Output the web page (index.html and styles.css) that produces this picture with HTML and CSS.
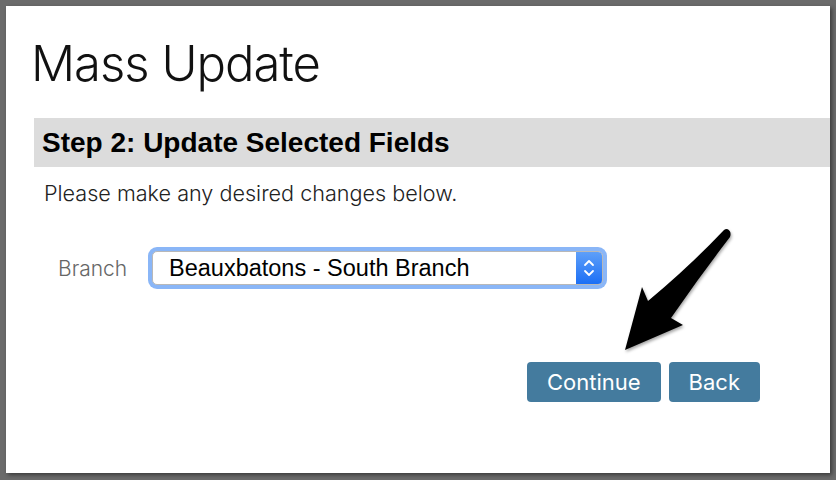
FILE: index.html
```html
<!DOCTYPE html>
<html lang="en">
<head>
    <meta charset="UTF-8">
    <meta name="viewport" content="width=device-width, initial-scale=1.0">
    <title>Mass Update</title>
    <link rel="stylesheet" href="styles.css">
</head>
<body>
    <div class="panel">
        <h1 class="page-title">Mass Update</h1>

        <div class="step">
            <h2 class="step-bar">Step 2: Update Selected Fields</h2>
            <p class="intro">Please make any desired changes below.</p>

            <div class="field-row">
                <label class="field-label">Branch</label>
                <div class="select">
                    <span class="select-value">Beauxbatons - South Branch</span>
                    <span class="stepper">
                        <svg width="12" height="20" viewBox="0 0 12 20">
                            <path d="M2 7 L6 3 L10 7 M2 13 L6 17 L10 13" fill="none" stroke="#fff" stroke-width="1.8" stroke-linecap="round" stroke-linejoin="round"/>
                        </svg>
                    </span>
                </div>
            </div>

            <div class="actions">
                <button class="btn">Continue</button>
                <button class="btn">Back</button>
            </div>
        </div>

        <!-- pointer arrow aimed at the Continue button -->
        <svg class="pointer" width="130" height="140" viewBox="610 222 130 140">
            <path d="M724 230 Q690 266 648 301 L642 287 L625 350 L683 325 L671 318 Q700 276 730 237 Q732 231 727 229 Q725 229 724 230 Z" fill="#000"/>
        </svg>
    </div>
</body>
</html>
```

FILE: styles.css
```css
body {
    margin: 0;
    padding: 6px 6px 7px 6px;
    background: #6b6b6b;
    font-family: 'Inter', 'Liberation Sans', sans-serif;
}
.panel {
    position: relative;
    height: 467px;
    background: #fff;
    box-shadow: 2px 2px 4px rgba(0, 0, 0, 0.45);
    padding-left: 28px;
    box-sizing: border-box;
}
.page-title {
    margin: 0 0 0 -3px;
    padding-top: 28px;
    height: 84px;
    font-size: 49px;
    font-weight: 300;
    color: #111;
    letter-spacing: -1px;
}
.step-bar {
    margin: 0;
    height: 49px;
    line-height: 49px;
    padding-left: 8px;
    background: #dcdcdc;
    font-family: 'Liberation Sans', Arial, sans-serif;
    font-size: 28px;
    font-weight: bold;
    color: #000;
}
.intro {
    margin: 13px 0 0 10px;
    font-size: 21.6px;
    font-weight: 300;
    color: #222;
}
.field-row {
    display: flex;
    align-items: center;
    margin-top: 45px;
    padding-left: 24px;
}
.field-label {
    width: 94px;
    font-size: 21px;
    font-weight: 300;
    color: #666;
}
.select {
    display: flex;
    align-items: stretch;
    width: 449px;
    height: 32px;
    border: 1px solid #b8b8b8;
    border-radius: 5px;
    box-shadow: 0 0 0 4px #8ab6f7;
    background: #fff;
    overflow: hidden;
}
.select-value {
    flex: 1;
    padding-left: 16px;
    line-height: 32px;
    font-family: 'Liberation Sans', Arial, sans-serif;
    font-size: 23.5px;
    color: #000;
}
.stepper {
    width: 26px;
    display: flex;
    align-items: center;
    justify-content: center;
    background: linear-gradient(#5e9ff9, #1c6ff5);
}
.actions {
    display: flex;
    justify-content: flex-end;
    gap: 8px;
    margin-top: 77px;
    padding-right: 70px;
}
.btn {
    height: 40px;
    padding: 0 20px;
    background: #447b9e;
    color: #fff;
    border: none;
    border-radius: 4px;
    font-family: 'Inter', 'Liberation Sans', sans-serif;
    font-size: 22px;
    cursor: pointer;
}
.btn:hover {
    background: #386885;
}
.pointer {
    position: absolute;
    left: 604px;
    top: 216px;
    filter: drop-shadow(1px 2px 1.5px rgba(0, 0, 0, 0.35));
}
```
